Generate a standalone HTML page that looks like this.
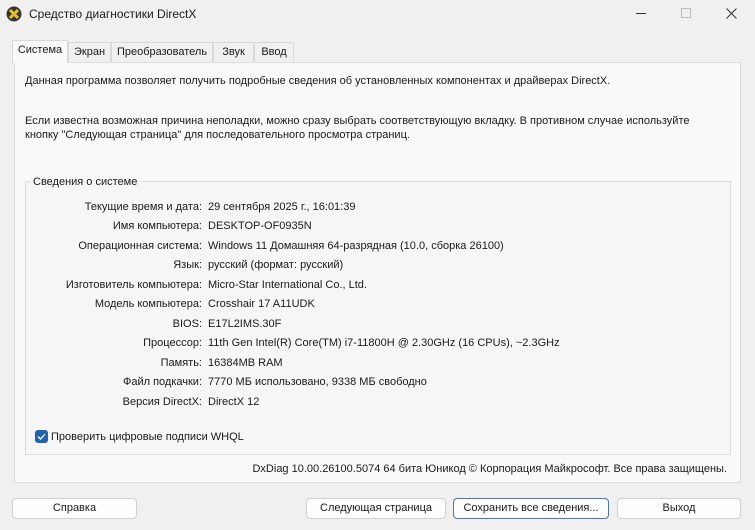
<!DOCTYPE html>
<html><head><meta charset="utf-8"><style>
*{margin:0;padding:0;box-sizing:border-box}
body{width:755px;height:530px;background:#f0f0f0;font-family:"Liberation Sans",sans-serif;font-size:11px;color:#1a1a1a;position:relative;overflow:hidden}
.a{position:absolute;white-space:nowrap}
.tab{position:absolute;top:42px;height:20px;border:1px solid #d9d9d9;border-bottom:none;background:#f0f0f0;padding:3px 0 0;text-align:center}
.panel{position:absolute;left:14px;top:62px;width:727px;height:421px;background:#f9f9f9;border:1px solid #dcdcdc}
.grp{position:absolute;left:25px;top:181px;width:706px;height:274px;border:1px solid #dcdcdc;background:#f6f6f6}
.lbl{position:absolute;right:553px;text-align:right;white-space:nowrap}
.val{position:absolute;left:208px;white-space:nowrap}
.btn{position:absolute;top:498px;height:21px;background:#fdfdfd;border:1px solid #d0d0d0;border-radius:4px;text-align:center;line-height:19px}
</style></head><body>
<svg class="a" style="left:6px;top:6px" width="16" height="16" viewBox="0 0 16 16"><circle cx="8" cy="8" r="7.5" fill="#333"/><path d="M4 4L12 12M12 4L4 12" stroke="#e8c020" stroke-width="3"/></svg>
<div class="a" style="left:29px;top:7px;font-size:12px">Средство диагностики DirectX</div>
<div class="a" style="left:636px;top:13px;width:10px;height:1px;background:#333"></div>
<div class="a" style="left:681px;top:8px;width:10px;height:10px;border:1px solid #bbb"></div>
<svg class="a" style="left:726px;top:8px" width="11" height="11"><path d="M0.5 0.5L10.5 10.5M10.5 0.5L0.5 10.5" stroke="#333"/></svg>
<div class="panel"></div>
<div class="tab" style="left:12px;top:40px;height:23px;width:56px;background:#f9f9f9;z-index:2">Система</div>
<div class="tab" style="left:68px;width:43px">Экран</div>
<div class="tab" style="left:111px;width:102px">Преобразователь</div>
<div class="tab" style="left:213px;width:41px">Звук</div>
<div class="tab" style="left:254px;width:40px">Ввод</div>
<div class="a" style="left:25px;top:75px">Данная программа позволяет получить подробные сведения об установленных компонентах и драйверах DirectX.</div>
<div class="a" style="left:25px;top:114px;line-height:14px">Если известна возможная причина неполадки, можно сразу выбрать соответствующую вкладку. В противном случае используйте<br>кнопку "Следующая страница" для последовательного просмотра страниц.</div>
<div class="grp"></div>
<div class="a" style="left:30px;top:176px;background:#f6f6f6;padding:0 3px">Сведения о системе</div>
<div class="lbl" style="top:201px">Текущие время и дата:</div><div class="val" style="top:201px">29 сентября 2025 г., 16:01:39</div>
<div class="lbl" style="top:220px">Имя компьютера:</div><div class="val" style="top:220px">DESKTOP-OF0935N</div>
<div class="lbl" style="top:240px">Операционная система:</div><div class="val" style="top:240px">Windows 11 Домашняя 64-разрядная (10.0, сборка 26100)</div>
<div class="lbl" style="top:259px">Язык:</div><div class="val" style="top:259px">русский (формат: русский)</div>
<div class="lbl" style="top:279px">Изготовитель компьютера:</div><div class="val" style="top:279px">Micro-Star International Co., Ltd.</div>
<div class="lbl" style="top:298px">Модель компьютера:</div><div class="val" style="top:298px">Crosshair 17 A11UDK</div>
<div class="lbl" style="top:318px">BIOS:</div><div class="val" style="top:318px">E17L2IMS.30F</div>
<div class="lbl" style="top:337px">Процессор:</div><div class="val" style="top:337px">11th Gen Intel(R) Core(TM) i7-11800H @ 2.30GHz (16 CPUs), ~2.3GHz</div>
<div class="lbl" style="top:357px">Память:</div><div class="val" style="top:357px">16384MB RAM</div>
<div class="lbl" style="top:376px">Файл подкачки:</div><div class="val" style="top:376px">7770 МБ использовано, 9338 МБ свободно</div>
<div class="lbl" style="top:396px">Версия DirectX:</div><div class="val" style="top:396px">DirectX 12</div>
<svg class="a" style="left:35px;top:430px" width="13" height="13"><rect width="13" height="13" rx="3" fill="#1f63b5"/><path d="M3 6.5L5.5 9L10 4" stroke="#fff" stroke-width="1.3" fill="none"/></svg>
<div class="a" style="left:51px;top:431px">Проверить цифровые подписи WHQL</div>
<div class="a" style="right:28px;top:463px">DxDiag 10.00.26100.5074 64 бита Юникод © Корпорация Майкрософт. Все права защищены.</div>
<div class="btn" style="left:12px;width:125px">Справка</div>
<div class="btn" style="left:306px;width:140px">Следующая страница</div>
<div class="btn" style="left:453px;width:156px;border-color:#4a7ab0">Сохранить все сведения...</div>
<div class="btn" style="left:617px;width:124px">Выход</div>
</body></html>
